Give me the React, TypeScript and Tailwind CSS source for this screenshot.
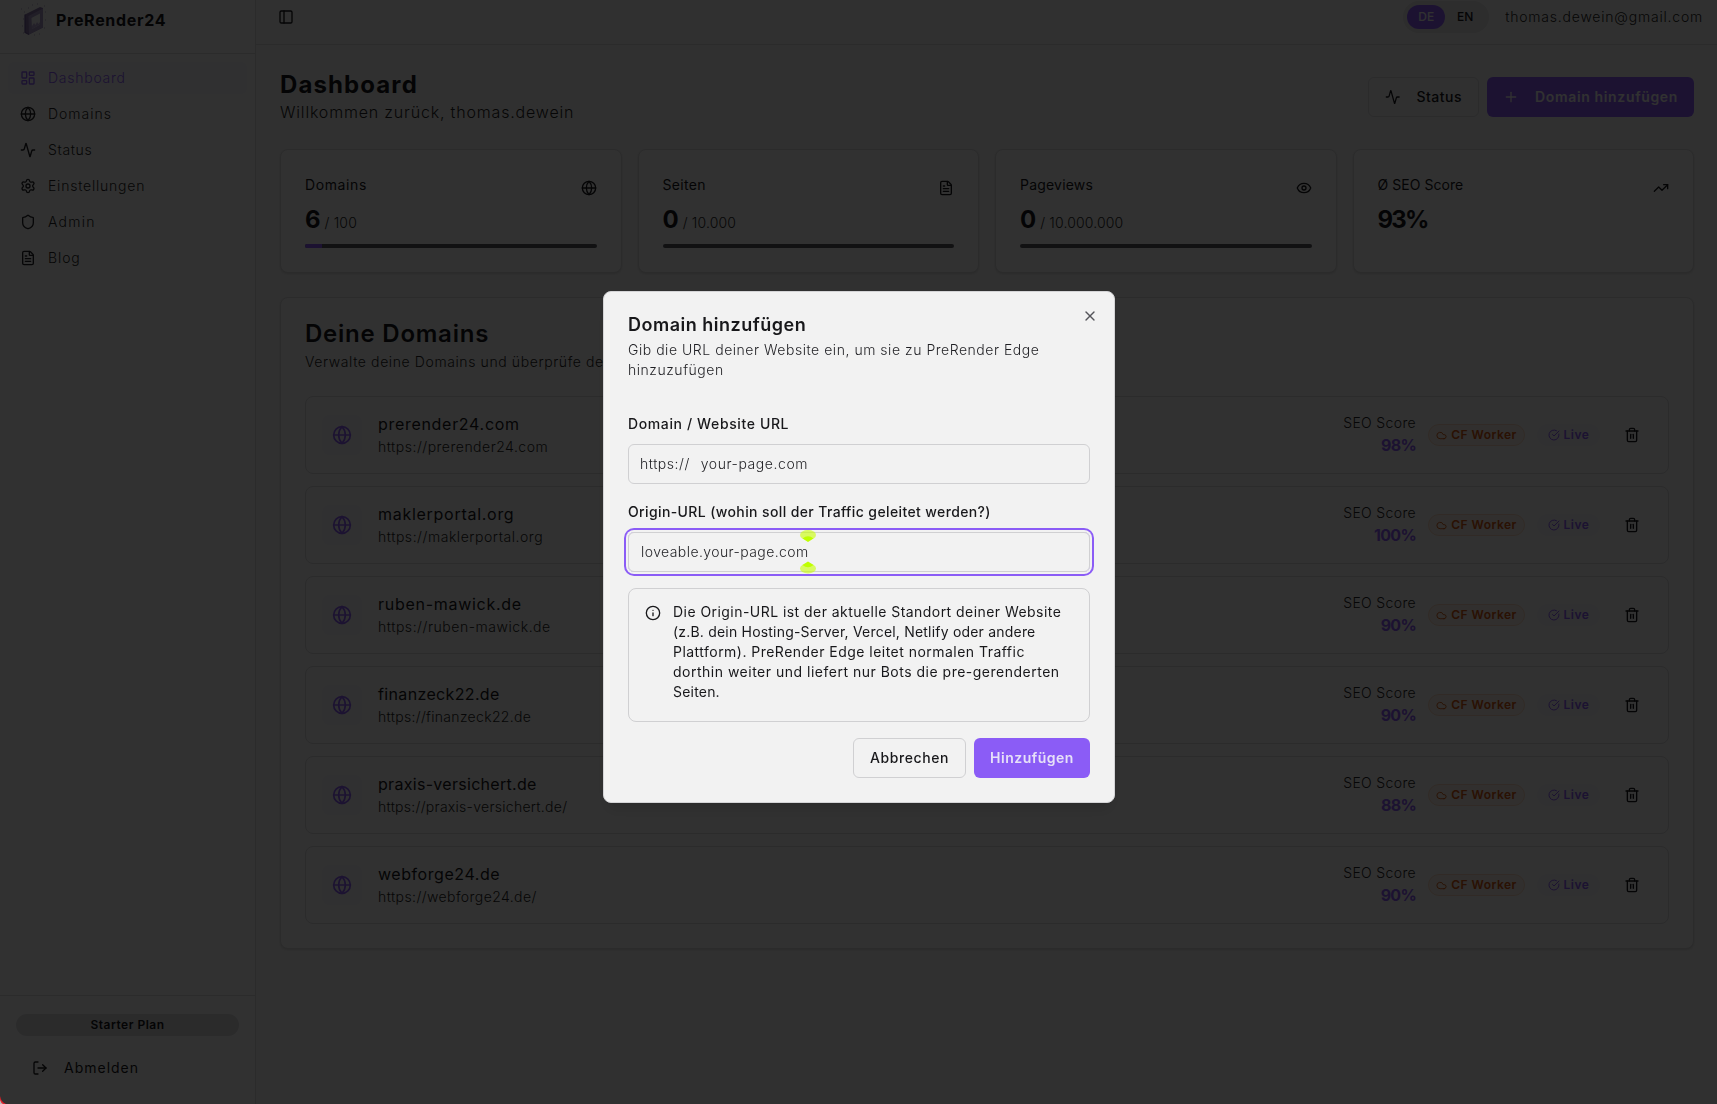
import { Activity, CircleCheckBig, Cloud, Eye, FileText, Globe, Info, LayoutDashboard, LogOut, PanelLeft, Plus, Settings, Shield, Trash2, TrendingUp, X } from 'lucide-react';

const navItems = [
  { label: 'Dashboard', icon: LayoutDashboard, active: true, tracking: 'tracking-[0.75px]' },
  { label: 'Domains', icon: Globe, tracking: 'tracking-[1px]' },
  { label: 'Status', icon: Activity, tracking: 'tracking-[0.65px]' },
  { label: 'Einstellungen', icon: Settings, tracking: 'tracking-[0.78px]' },
  { label: 'Admin', icon: Shield, tracking: 'tracking-[1.25px]' },
  { label: 'Blog', icon: FileText, tracking: 'tracking-[0.9px]' },
];

const stats = [
  { label: 'Domains', value: '6', limit: '/ 100', icon: Globe, percent: 6, tracking: 'tracking-[0.6px]' },
  { label: 'Seiten', value: '0', limit: '/ 10.000', icon: FileText, percent: 0, tracking: 'tracking-[0.3px]' },
  { label: 'Pageviews', value: '0', limit: '/ 10.000.000', icon: Eye, percent: 0, tracking: 'tracking-[0.2px]' },
  { label: 'Ø SEO Score', value: '93%', icon: TrendingUp, tracking: 'tracking-[0.05px]' },
];

const domains = [
  { name: 'prerender24.com', url: 'https://prerender24.com', score: 98, nameTracking: 'tracking-[0.7px]', urlTracking: 'tracking-[0.5px]' },
  { name: 'maklerportal.org', url: 'https://maklerportal.org', score: 100, nameTracking: 'tracking-[0.72px]', urlTracking: 'tracking-[0.54px]' },
  { name: 'ruben-mawick.de', url: 'https://ruben-mawick.de', score: 90, nameTracking: 'tracking-[0.72px]', urlTracking: 'tracking-[0.54px]' },
  { name: 'finanzeck22.de', url: 'https://finanzeck22.de', score: 90, nameTracking: 'tracking-[0.35px]', urlTracking: 'tracking-[0.31px]' },
  { name: 'praxis-versichert.de', url: 'https://praxis-versichert.de/', score: 88, nameTracking: 'tracking-[0.3px]', urlTracking: 'tracking-[0.28px]' },
  { name: 'webforge24.de', url: 'https://webforge24.de/', score: 90, nameTracking: 'tracking-[0.56px]', urlTracking: 'tracking-[0.42px]' },
];

function Logo() {
  return (
    <svg width="28" height="36" viewBox="0 0 28 36" fill="none">
      <path d="M5 12.500 20 5l3 1v19.500L9 32.500l-4-2z" fill="#8673a6" />
      <path d="M8.500 14 23 6.500v19L9 32.500z" fill="#a597c4" />
      <path d="M11.500 16 20 11.500v11L12 27z" fill="#ececf0" />
      <path d="M12 27v-3l2-3 1.500 2 1.500-3 1.500 2 1.500-2v2.500z" fill="#b6a5d2" />
      <path d="M5 12.500V30.500l4 2" stroke="#6b5791" strokeWidth="1.200" />
      <path d="M1 7h1M4 10h1M8 6h1M12 3h1M17 2h1M24 4h1M25 10h1M25 18h1M24 26h1M19 32h1M14 33h1M3 31h1M2 24h1M3 17h1" stroke="#a9a0bd" />
    </svg>
  );
}

function Sidebar() {
  return (
    <aside className="flex w-64 shrink-0 flex-col border-r border-[#d4d4d6] bg-[#f5f5f5]">
      <div className="flex h-[54px] items-start gap-2 border-b border-[#d4d4d6] pl-5 pt-[2px]">
        <Logo />
        <span className="text-base font-bold leading-9 tracking-[0.7px]">PreRender24</span>
      </div>
      <nav className="flex flex-1 flex-col gap-1 p-2">
        {navItems.map(({ label, icon: Icon, active, tracking }) => (
          <a key={label} className={`flex h-8 items-center gap-3 rounded-md px-3 text-sm font-light ${active ? 'bg-[#efeef6] text-[#8b5cf6]' : 'text-[#1f1f23]'}`}>
            <Icon size={16} />
            <span className={tracking}>{label}</span>
          </a>
        ))}
      </nav>
      <div className="h-[109px] border-t border-[#d4d4d6] px-4 pt-[18px]">
        <div className="flex h-[22px] items-center justify-center rounded-full bg-[#d6d6d8] text-xs font-semibold tracking-[0.5px]">Starter Plan</div>
        <button className="mt-[14px] flex h-9 items-center gap-4 px-4 text-sm tracking-[1px]">
          <LogOut size={16} />
          <span>Abmelden</span>
        </button>
      </div>
    </aside>
  );
}

function TopBar() {
  return (
    <header className="flex h-[45px] items-start justify-between border-b border-[#d4d4d6] pl-[22px] pr-[14px] pt-px">
      <PanelLeft size={16} className="mt-2" />
      <div className="flex items-center gap-4">
        <div className="flex h-8 w-[86px] items-center rounded-full bg-[#dededf] p-1 text-xs font-medium">
          <span className="flex h-6 w-[38px] items-center justify-center rounded-full bg-[#8b5cf6] text-[#f2f2f2]">DE</span>
          <span className="flex h-6 w-10 items-center justify-center">EN</span>
        </div>
        <span className="text-sm font-light tracking-[0.79px] text-[#1f1f23]">thomas.dewein@gmail.com</span>
      </div>
    </header>
  );
}

function StatCard({ label, value, limit, icon: Icon, percent, tracking }: (typeof stats)[number]) {
  return (
    <div className="h-[124px] rounded-lg border border-[#d6d6d8] bg-[#f5f5f5] px-6 pt-6 shadow-sm">
      <div className="flex h-7 items-start justify-between">
        <span className={`text-sm leading-[22px] ${tracking}`}>{label}</span>
        <Icon size={16} className="mt-[6px]" />
      </div>
      <div className="mt-[2px] flex h-8 items-baseline gap-1">
        <span className={`text-2xl font-bold ${limit ? '' : 'tracking-[-1.8px]'}`}>{value}</span>
        {limit && <span className="text-sm font-light tracking-[0.15px] text-[#1f1f23]">{limit}</span>}
      </div>
      {percent !== undefined && (
        <div className="mt-2 h-1 overflow-hidden rounded-full bg-[#55555c]">
          <div className="h-full bg-[#8b5cf6]" style={{ width: `${percent}%` }} />
        </div>
      )}
    </div>
  );
}

function DomainRow({ name, url, score, nameTracking, urlTracking }: (typeof domains)[number]) {
  return (
    <div className="flex h-[78px] items-center justify-between rounded-lg border border-[#d4d4d6] px-4">
      <div className="flex items-center gap-4">
        <div className="flex h-10 w-10 items-center justify-center rounded-lg bg-[#efeef6]">
          <Globe size={20} className="text-[#8b5cf6]" />
        </div>
        <div>
          <p className={`-mt-px mb-px text-base ${nameTracking}`}>{name}</p>
          <p className={`text-sm font-light text-[#1f1f23] ${urlTracking}`}>{url}</p>
        </div>
      </div>
      <div className="flex items-center gap-3">
        <div className="text-right">
          <p className="text-sm font-light tracking-[0.35px] text-[#1f1f23]">SEO Score</p>
          <p className="text-base font-bold tracking-[-0.7px] text-[#8b5cf6]">{score}%</p>
        </div>
        <span className="flex h-[22px] w-[97px] items-center justify-center gap-1 rounded-full border border-[#f3d3bc] bg-[#f4ebe5] text-xs font-semibold tracking-[0.49px] text-[#cf560f]">
          <Cloud size={11} />
          CF Worker
        </span>
        <span className="flex h-[22px] w-[63px] items-center justify-center gap-1 rounded-full bg-[#efeef6] text-xs font-semibold tracking-[0.5px] text-[#8b5cf6]">
          <CircleCheckBig size={12} />
          Live
        </span>
        <button className="flex h-10 w-10 items-center justify-center">
          <Trash2 size={16} />
        </button>
      </div>
    </div>
  );
}

function SelectionHandles() {
  return (
    <svg className="absolute left-[171px] top-[-3px]" width="16" height="44" viewBox="0 0 16 44">
      <ellipse cx="8" cy="5" rx="8" ry="5" fill="#c8ff00" fillOpacity=".6" />
      <path d="M2.500 8.500Q8 4 13.500 8.500L8 12z" fill="#bfff00" />
      <ellipse cx="8" cy="38.500" rx="8" ry="5" fill="#c8ff00" fillOpacity=".6" />
      <path d="M2.500 35 8 31.500l5.500 3.500Q8 39.500 2.500 35z" fill="#bfff00" />
    </svg>
  );
}

function AddDomainDialog() {
  return (
    <div role="dialog" className="relative ml-px mt-[-10px] flex h-[512px] w-[512px] flex-col rounded-lg border border-[#d4d4d6] bg-[#f2f2f2] px-6 pt-6 shadow-lg">
      <h2 className="text-lg font-semibold leading-[18px] tracking-[0.5px]">Domain hinzufügen</h2>
      <p className="mt-[6px] whitespace-nowrap text-sm font-light tracking-[0.53px] text-[#1f1f23]">
        Gib die URL deiner Website ein, um sie zu PreRender Edge<br />hinzuzufügen
      </p>
      <X size={16} className="absolute right-4 top-4 text-[#55555a]" />

      <label className="mt-[34px] text-sm font-medium tracking-[0.62px]">Domain / Website URL</label>
      <div className="mt-[10px] flex h-10 items-center gap-[11px] rounded-md border border-[#d0d0d2] px-[11px] text-sm font-light text-[#1f1f23]">
        <span className="tracking-[0.52px]">https://</span>
        <span className="tracking-[0.56px]">your-page.com</span>
      </div>

      <label className="mt-[18px] text-sm font-medium tracking-[0.38px]">Origin-URL (wohin soll der Traffic geleitet werden?)</label>
      <div className="relative mt-[10px] flex h-10 items-center rounded-md border border-[#d0d0d2] px-3 text-sm font-light tracking-[0.42px] text-[#1f1f23] ring-2 ring-[#8b5cf6] ring-offset-2 ring-offset-[#f2f2f2]">
        loveable.your-page.com
        <SelectionHandles />
      </div>

      <div className="mt-4 flex h-[134px] gap-3 rounded-lg border border-[#d0d0d2] px-4 pt-[13px]">
        <Info size={16} className="mt-[3px] shrink-0" />
        <div className="whitespace-nowrap text-sm">
          <p className="tracking-[0.45px]">Die Origin-URL ist der aktuelle Standort deiner Website</p>
          <p className="tracking-[0.2px]">(z.B. dein Hosting-Server, Vercel, Netlify oder andere</p>
          <p className="tracking-[0.47px]">Plattform). PreRender Edge leitet normalen Traffic</p>
          <p className="tracking-[0.5px]">dorthin weiter und liefert nur Bots die pre-gerenderten</p>
          <p className="tracking-[0.2px]">Seiten.</p>
        </div>
      </div>

      <div className="mt-4 flex justify-end gap-2">
        <button className="h-10 w-[113px] rounded-md border border-[#d0d0d2] text-sm font-medium tracking-[0.6px]">Abbrechen</button>
        <button className="h-10 w-[116px] rounded-md bg-[#8b5cf6] text-sm font-semibold tracking-[0.5px] text-[#e6e0f8]">Hinzufügen</button>
      </div>
    </div>
  );
}

export default function App() {
  return (
    <div className="relative h-[1104px] w-[1717px] overflow-hidden bg-[#f0f0f0] font-['Inter',sans-serif] text-[#18181b]">
      <div className="flex h-full">
        <Sidebar />
        <div className="flex-1">
          <TopBar />
          <main className="py-6 pl-6 pr-[23px]">
            <div className="flex items-center justify-between">
              <div>
                <h1 className="text-2xl font-bold tracking-[1.1px]">Dashboard</h1>
                <p className="-mt-px mb-px text-base font-light tracking-[0.82px] text-[#1f1f23]">Willkommen zurück, thomas.dewein</p>
              </div>
              <div className="flex gap-2">
                <button className="flex h-10 w-[111px] items-center gap-4 rounded-md border border-[#d6d6d8] px-4 text-sm font-medium tracking-[0.5px]">
                  <Activity size={16} />
                  Status
                </button>
                <button className="flex h-10 w-[207px] items-center gap-4 whitespace-nowrap rounded-md bg-[#8b5cf6] px-4 text-sm font-semibold tracking-[0.65px] text-[#f2f2f2]">
                  <Plus size={16} />
                  Domain hinzufügen
                </button>
              </div>
            </div>

            <div className="mt-6 grid grid-cols-4 gap-4">
              {stats.map((stat) => <StatCard key={stat.label} {...stat} />)}
            </div>

            <section className="mt-6 rounded-lg border border-[#d6d6d8] bg-[#f5f5f5] p-6 shadow-sm">
              <h2 className="text-2xl font-semibold leading-6 tracking-[0.76px]">Deine Domains</h2>
              <p className="mt-[6px] text-sm font-light tracking-[0.6px] text-[#1f1f23]">Verwalte deine Domains und überprüfe deren Status</p>
              <div className="mt-6 flex flex-col gap-3">
                {domains.map((domain) => <DomainRow key={domain.name} {...domain} />)}
              </div>
            </section>
          </main>
        </div>
      </div>

      <div className="fixed inset-0 flex items-center justify-center bg-black/80">
        <AddDomainDialog />
      </div>

      {/* window frame showing at the rounded corner */}
      <svg className="absolute bottom-0 left-0" width="6" height="8" viewBox="0 0 6 8">
        <path d="M0 0Q1 6 6 8H0z" fill="#e0202a" />
        <path d="M0 4Q1 7 3 8H0z" fill="#b9b9b9" />
      </svg>
    </div>
  );
}
